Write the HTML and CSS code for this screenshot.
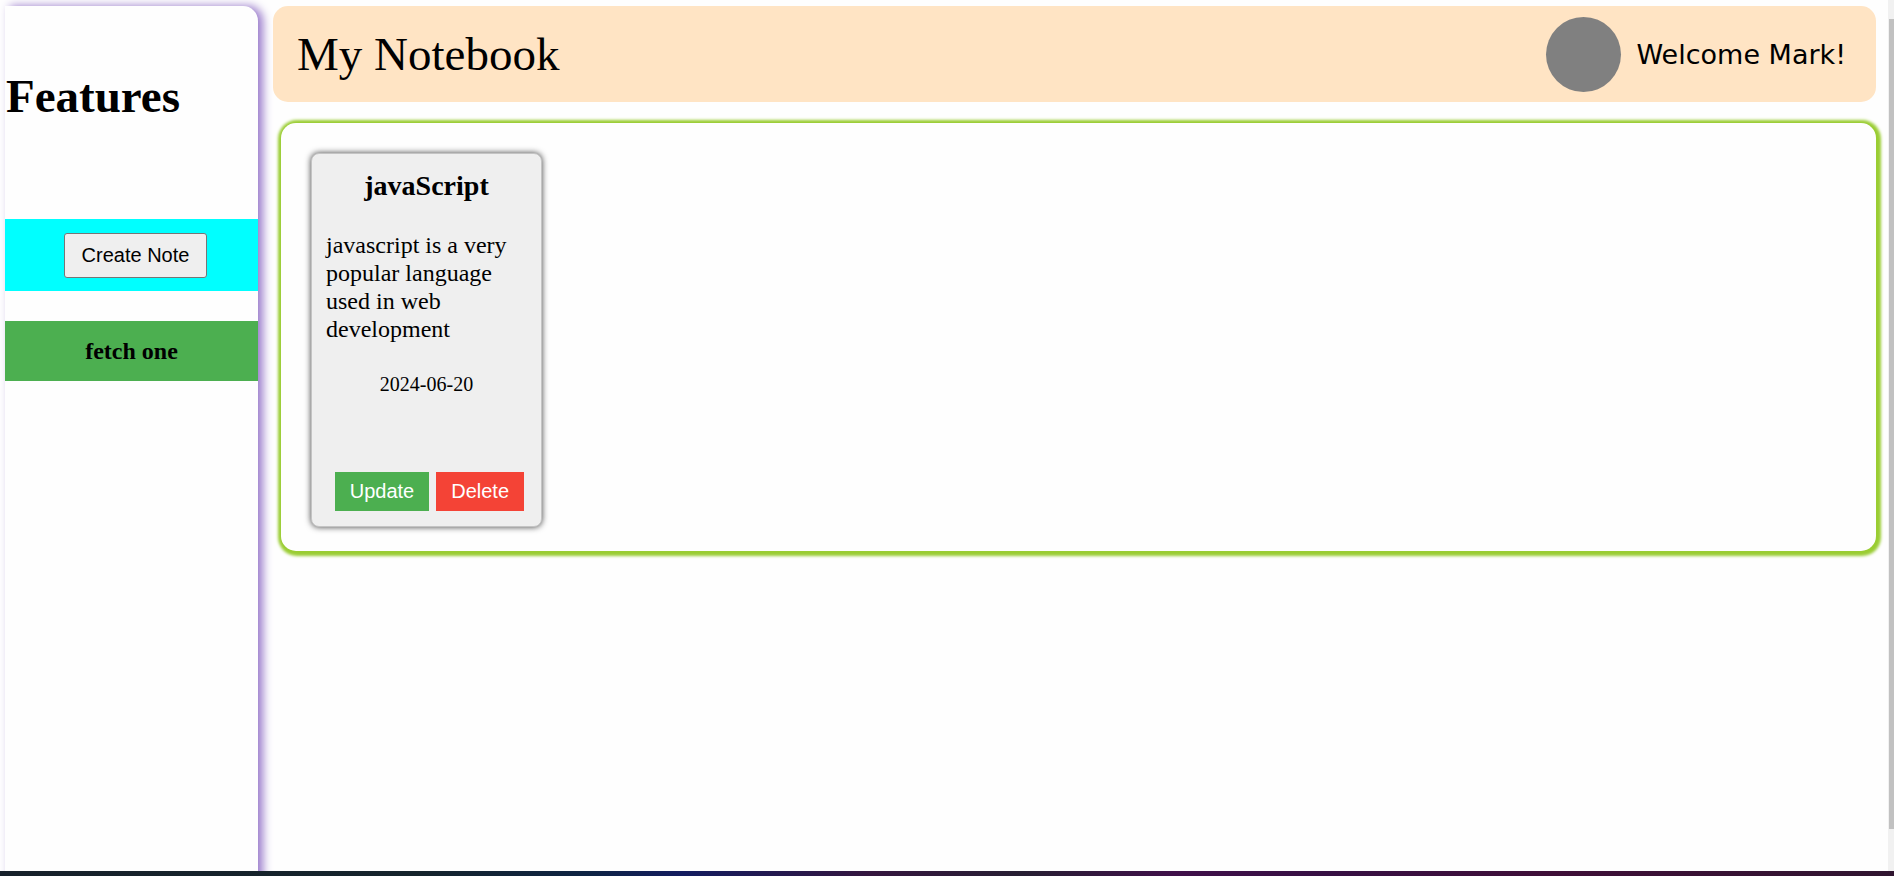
FILE: index.html
```html
<!DOCTYPE html>
<html lang="en">
<head>
  <meta charset="utf-8">
  <title>My Notebook</title>
  <link rel="stylesheet" href="styles.css">
</head>
<body>
  <div class="page">
    <div class="app">
      <aside class="sidebar">
        <h1 class="sidebar-title">Features</h1>
        <div class="create-row">
          <button class="create-button" type="button">Create Note</button>
        </div>
        <div class="fetch-row">fetch one</div>
      </aside>
      <main class="main">
        <header class="header">
          <div class="brand">My Notebook</div>
          <div class="user">
            <div class="avatar"></div>
            <span class="welcome">Welcome Mark!</span>
          </div>
        </header>
        <section class="board">
          <article class="note">
            <h2 class="note-title">javaScript</h2>
            <p class="note-text">javascript is a very popular language used in web development</p>
            <time class="note-date" datetime="2024-06-20">2024-06-20</time>
            <div class="note-actions">
              <button class="action update" type="button">Update</button>
              <button class="action delete" type="button">Delete</button>
            </div>
          </article>
        </section>
      </main>
      <div class="scroll-track"><div class="scroll-thumb"></div></div>
    </div>
    <div class="desktop-edge"></div>
  </div>
</body>
</html>
```
FILE: styles.css
```css
* {
  box-sizing: border-box;
}

body {
  margin: 0;
  background: #fefefe;
  color: #000;
  font-family: "Liberation Serif", "Times New Roman", serif;
}

.page {
  display: flex;
  flex-direction: column;
  height: 100vh;
}

.app {
  display: flex;
  flex: 1;
  min-height: 0;
  overflow: hidden;
}

/* The sidebar runs on below the fold, so its shadow does not end on screen. */
.sidebar {
  flex: none;
  width: 253px;
  margin: 6px 15px -20px 5px;
  padding-top: 63px;
  border-top-right-radius: 15px;
  background: #fefefe;
  box-shadow: 5px 0 10px #997acb;
}

.sidebar-title {
  margin: 0 0 96px;
  padding-left: 1px;
  font-size: 47px;
  line-height: 54px;
}

.create-row {
  display: flex;
  justify-content: center;
  margin-bottom: 30px;
  padding: 14px 0 13px 8px;
  background: #00ffff;
}

.create-button {
  height: 45px;
  padding: 0 17px;
  border: 1px solid #767676;
  border-radius: 3px;
  background: #efefef;
  color: #000;
  font: 20px "Liberation Sans", Arial, sans-serif;
}

.fetch-row {
  background: #4caf50;
  font-size: 24px;
  font-weight: bold;
  line-height: 60px;
  text-align: center;
}

.main {
  flex: 1;
  min-width: 0;
  padding: 6px 12px 0 0;
}

.header {
  display: flex;
  align-items: center;
  justify-content: space-between;
  height: 96px;
  padding: 0 30px 0 24px;
  border-radius: 15px;
  background: #ffe4c4;
}

.brand {
  font-size: 47px;
}

.user {
  display: flex;
  align-items: center;
  gap: 16px;
}

.avatar {
  width: 75px;
  height: 75px;
  border-radius: 50%;
  background: #808080;
}

.welcome {
  font: 27px Verdana, "DejaVu Sans", sans-serif;
}

.board {
  display: flex;
  flex-wrap: wrap;
  gap: 30px;
  margin: 21px 0 0 8px;
  padding: 30px 30px 24px;
  border-radius: 15px;
  background: #fefefe;
  box-shadow: 1px 1px 3px 4px #9acd32;
}

.note {
  display: flex;
  flex-direction: column;
  align-items: center;
  width: 231px;
  padding: 16px 14px 15px;
  border: 1px solid #c4c4c4;
  border-radius: 8px;
  background: #efefef;
  box-shadow: 0 0 6px rgba(0, 0, 0, 0.75);
}

.note-title {
  margin: 0 0 29px;
  font-size: 28px;
  line-height: 32px;
}

.note-text {
  width: 100%;
  margin: 0 0 29px;
  font-size: 24px;
  line-height: 28px;
}

.note-date {
  margin-bottom: 76px;
  font-size: 20px;
  line-height: 24px;
}

.note-actions {
  display: flex;
  align-self: flex-end;
  gap: 7px;
  padding-right: 3px;
}

.action {
  height: 39px;
  padding: 0 15px;
  border: 0;
  color: #fff;
  font: 20px "Liberation Sans", Arial, sans-serif;
}

.update {
  background: #4caf50;
}

.delete {
  background: #f44336;
}

.scroll-track {
  flex: none;
  width: 6px;
  padding: 19px 0 42px 1px;
  background: #f1f1f1;
}

.scroll-thumb {
  height: 100%;
  background: #c1c1c1;
}

.desktop-edge {
  flex: none;
  height: 5px;
  background: linear-gradient(90deg, #17212b 0%, #15242c 22%, #0e2444 31%, #131c60 36%, #35163f 46%, #271f33 54%, #40104a 62%, #371044 70%, #3f0f38 82%, #301530 100%);
}
```
